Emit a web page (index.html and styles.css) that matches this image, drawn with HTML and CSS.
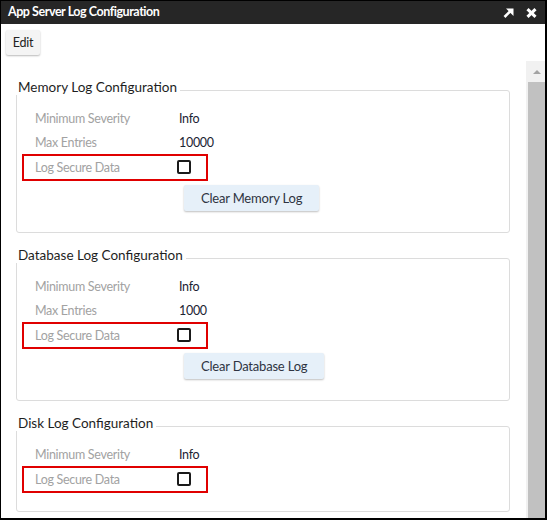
FILE: index.html
```html
<!DOCTYPE html>
<html>
<head>
<meta charset="utf-8">
<link rel="stylesheet" href="styles.css">
</head>
<body>
<div class="window">
  <div class="titlebar">
    <span class="title">App Server Log Configuration</span>
    <span class="title-icons">
      <svg class="ico" width="11" height="10" viewBox="0 0 11 10"><line x1="1.5" y1="9" x2="8" y2="2.5" stroke="#fff" stroke-width="2.6"/><polygon points="3,0.5 10.5,0.5 10.5,8" fill="#fff"/></svg>
      <svg class="ico" width="11" height="10" viewBox="0 0 11 10"><line x1="1.5" y1="1.2" x2="9.5" y2="8.8" stroke="#fff" stroke-width="3"/><line x1="9.5" y1="1.2" x2="1.5" y2="8.8" stroke="#fff" stroke-width="3"/></svg>
    </span>
  </div>
  <div class="toolbar">
    <button class="btn-edit">Edit</button>
  </div>
  <div class="body">
    <div class="pane">
      <div class="group">
        <div class="group-title">Memory Log Configuration</div>
        <div class="row"><span class="label">Minimum Severity</span><span class="value">Info</span></div>
        <div class="row"><span class="label">Max Entries</span><span class="value">10000</span></div>
        <div class="row secure"><span class="label">Log Secure Data</span><span class="check"></span></div>
        <button class="btn-action">Clear Memory Log</button>
      </div>
      <div class="group">
        <div class="group-title">Database Log Configuration</div>
        <div class="row"><span class="label">Minimum Severity</span><span class="value">Info</span></div>
        <div class="row"><span class="label">Max Entries</span><span class="value">1000</span></div>
        <div class="row secure"><span class="label">Log Secure Data</span><span class="check"></span></div>
        <button class="btn-action">Clear Database Log</button>
      </div>
      <div class="group">
        <div class="group-title">Disk Log Configuration</div>
        <div class="row"><span class="label">Minimum Severity</span><span class="value">Info</span></div>
        <div class="row secure"><span class="label">Log Secure Data</span><span class="check"></span></div>
      </div>
    </div>
    <div class="scrollbar">
      <div class="sb-arrow"><span class="tri"></span></div>
      <div class="sb-thumb"></div>
    </div>
  </div>
</div>
</body>
</html>
```
FILE: styles.css
```css
* { box-sizing: border-box; }
html, body { margin: 0; padding: 0; background: #fff; }
body { font-family: Lato, "Liberation Sans", sans-serif; }
.window {
  width: 547px;
  height: 520px;
  border: 1px solid #000;
  border-right-width: 2px;
  border-bottom-width: 2px;
  display: flex;
  flex-direction: column;
  overflow: hidden;
  background: #fff;
}
.titlebar {
  height: 23px;
  background: #262626;
  display: flex;
  align-items: center;
  justify-content: space-between;
  padding: 0 8px 1px 7px;
  flex: none;
}
.title {
  color: #fff;
  font-weight: bold;
  font-size: 12.5px;
  letter-spacing: -0.45px;
  line-height: 16px;
}
.title-icons { display: flex; gap: 12px; align-items: center; padding-top: 1px; }
.ico { display: block; }
.toolbar {
  height: 37px;
  flex: none;
  padding: 6px 0 0 5px;
}
.btn-edit {
  font-family: inherit;
  font-size: 12.5px;
  letter-spacing: -0.2px;
  color: #222;
  background: #f4f4f4;
  border: none;
  border-radius: 2px;
  height: 25px;
  width: 34px;
  padding: 0;
  box-shadow: 0 1px 2px rgba(0,0,0,0.28);
}
.body {
  flex: 1;
  display: flex;
  min-height: 0;
}
.pane {
  flex: 1;
  overflow: hidden;
  padding: 29px 16px 0 15px;
}
.group {
  border: 1px solid #dcdcdc;
  border-radius: 3px;
  padding: 0 0 21px 0;
  margin-bottom: 25px;
}
.group-title {
  display: table;
  margin: -12px 0 11px -1px;
  padding: 0 3px 0 2px;
  background: #fff;
  font-size: 13.5px;
  line-height: 16px;
  color: #1e1e1e;
}
.row {
  display: grid;
  grid-template-columns: 144px auto;
  align-items: center;
  height: 24px;
  padding-left: 18px;
  font-size: 12.5px;
  letter-spacing: -0.3px;
}
.label { color: #a2a2a2; }
.value { color: #1c2433; }
.row.secure {
  height: 27px;
  width: 186px;
  margin-left: 5px;
  border: 2px solid #e00000;
  padding-left: 11px;
}
.check {
  width: 14px;
  height: 14px;
  border: 2px solid #1a1a1a;
  border-radius: 2px;
  margin-left: -2px;
  margin-top: -1px;
}
.btn-action {
  display: block;
  margin: 4px 0 0 167px;
  height: 26px;
  padding: 0 17px;
  border: none;
  border-radius: 2px;
  background: #e6f0f9;
  color: #2e3442;
  font-family: inherit;
  font-size: 13px;
  letter-spacing: -0.2px;
  box-shadow: 0 1px 2px rgba(0,0,0,0.25);
}
.group:last-child .row.secure { margin-bottom: -3px; }
.scrollbar {
  width: 19px;
  flex: none;
  background: #f1f1f1;
  display: flex;
  flex-direction: column;
  padding-left: 2px;
}
.sb-arrow {
  height: 21px;
  display: flex;
  justify-content: center;
  padding-top: 9px;
}
.tri {
  width: 0; height: 0;
  border-left: 4px solid transparent;
  border-right: 4px solid transparent;
  border-bottom: 4px solid #a3a3a3;
}
.sb-thumb {
  flex: 1;
  background: #c1c1c1;
}
```
